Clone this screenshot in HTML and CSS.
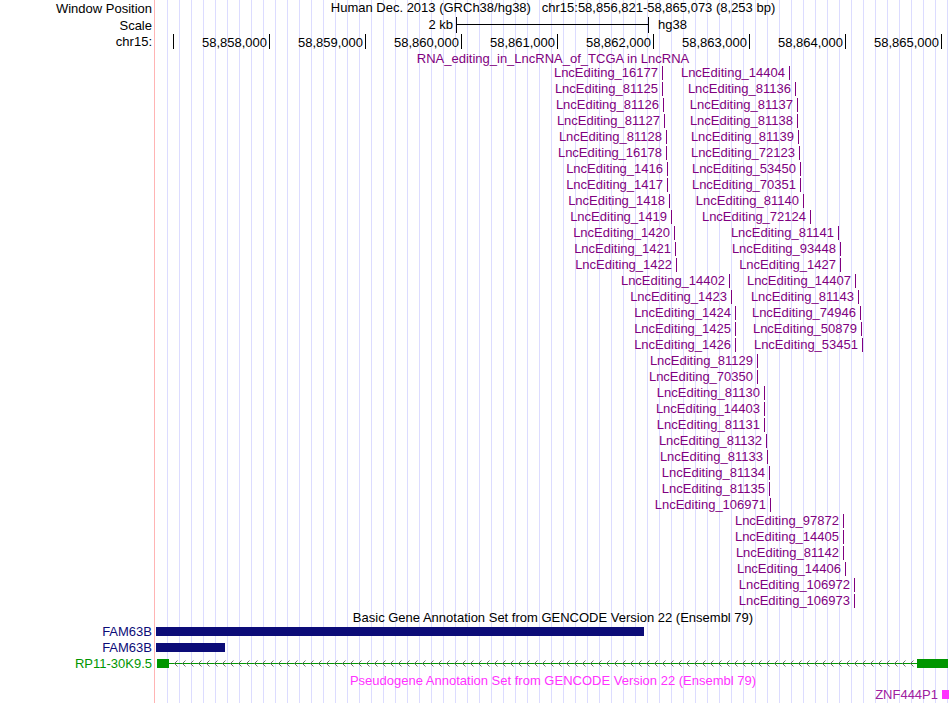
FILE: index.html
```html
<!DOCTYPE html>
<html lang="en">
<head>
<meta charset="utf-8">
<title>chr15:58,856,821-58,865,073</title>
<link rel="stylesheet" href="styles.css">
</head>
<body>
<main class="browser">
  <div class="labels">
    <div class="row ruler">Window Position</div>
    <div class="row ruler">Scale</div>
    <div class="row">chr15:</div>
    <div class="spacer"></div>
    <div class="row gene">FAM63B</div>
    <div class="row gene">FAM63B</div>
    <div class="row lnc">RP11-30K9.5</div>
    <div class="title"></div>
    <div class="row"></div>
  </div>
  <div class="tracks">
    <h1 class="row ruler position">Human Dec. 2013 (GRCh38/hg38)   chr15:58,856,821-58,865,073 (8,253 bp)</h1>
    <div class="row ruler">
      <span class="scale-size" style="--w:300">2 kb</span>
      <span class="scale-bar" style="--w:193"></span>
      <span class="assembly">hg38</span>
    </div>
    <div class="row bases">
      <span class="item" style="--w:18"></span>
      <span class="item" style="--w:96">58,858,000</span>
      <span class="item" style="--w:96">58,859,000</span>
      <span class="item" style="--w:96">58,860,000</span>
      <span class="item" style="--w:96">58,861,000</span>
      <span class="item" style="--w:96">58,862,000</span>
      <span class="item" style="--w:96">58,863,000</span>
      <span class="item" style="--w:96">58,864,000</span>
      <span class="item" style="--w:96">58,865,000</span>
    </div>
    <section class="editing">
      <h2 class="title">RNA_editing_in_LncRNA_of_TCGA in LncRNA</h2>
      <div class="row"><span class="item" style="--w:507">LncEditing_16177</span><span class="item" style="--w:127">LncEditing_14404</span></div>
      <div class="row"><span class="item" style="--w:507">LncEditing_81125</span><span class="item" style="--w:133">LncEditing_81136</span></div>
      <div class="row"><span class="item" style="--w:508">LncEditing_81126</span><span class="item" style="--w:134">LncEditing_81137</span></div>
      <div class="row"><span class="item" style="--w:509">LncEditing_81127</span><span class="item" style="--w:133">LncEditing_81138</span></div>
      <div class="row"><span class="item" style="--w:511">LncEditing_81128</span><span class="item" style="--w:132">LncEditing_81139</span></div>
      <div class="row"><span class="item" style="--w:511">LncEditing_16178</span><span class="item" style="--w:133">LncEditing_72123</span></div>
      <div class="row"><span class="item" style="--w:512">LncEditing_1416</span><span class="item" style="--w:133">LncEditing_53450</span></div>
      <div class="row"><span class="item" style="--w:512">LncEditing_1417</span><span class="item" style="--w:133">LncEditing_70351</span></div>
      <div class="row"><span class="item" style="--w:514">LncEditing_1418</span><span class="item" style="--w:134">LncEditing_81140</span></div>
      <div class="row"><span class="item" style="--w:516">LncEditing_1419</span><span class="item" style="--w:139">LncEditing_72124</span></div>
      <div class="row"><span class="item" style="--w:519">LncEditing_1420</span><span class="item" style="--w:164">LncEditing_81141</span></div>
      <div class="row"><span class="item" style="--w:520">LncEditing_1421</span><span class="item" style="--w:165">LncEditing_93448</span></div>
      <div class="row"><span class="item" style="--w:521">LncEditing_1422</span><span class="item" style="--w:164">LncEditing_1427</span></div>
      <div class="row"><span class="item" style="--w:574">LncEditing_14402</span><span class="item" style="--w:126">LncEditing_14407</span></div>
      <div class="row"><span class="item" style="--w:576">LncEditing_1423</span><span class="item" style="--w:127">LncEditing_81143</span></div>
      <div class="row"><span class="item" style="--w:580">LncEditing_1424</span><span class="item" style="--w:125">LncEditing_74946</span></div>
      <div class="row"><span class="item" style="--w:580">LncEditing_1425</span><span class="item" style="--w:126">LncEditing_50879</span></div>
      <div class="row"><span class="item" style="--w:580">LncEditing_1426</span><span class="item" style="--w:127">LncEditing_53451</span></div>
      <div class="row"><span class="item" style="--w:602">LncEditing_81129</span></div>
      <div class="row"><span class="item" style="--w:602">LncEditing_70350</span></div>
      <div class="row"><span class="item" style="--w:609">LncEditing_81130</span></div>
      <div class="row"><span class="item" style="--w:609">LncEditing_14403</span></div>
      <div class="row"><span class="item" style="--w:609">LncEditing_81131</span></div>
      <div class="row"><span class="item" style="--w:611">LncEditing_81132</span></div>
      <div class="row"><span class="item" style="--w:612">LncEditing_81133</span></div>
      <div class="row"><span class="item" style="--w:614">LncEditing_81134</span></div>
      <div class="row"><span class="item" style="--w:614">LncEditing_81135</span></div>
      <div class="row"><span class="item" style="--w:615">LncEditing_106971</span></div>
      <div class="row"><span class="item" style="--w:688">LncEditing_97872</span></div>
      <div class="row"><span class="item" style="--w:688">LncEditing_14405</span></div>
      <div class="row"><span class="item" style="--w:688">LncEditing_81142</span></div>
      <div class="row"><span class="item" style="--w:690">LncEditing_14406</span></div>
      <div class="row"><span class="item" style="--w:699">LncEditing_106972</span></div>
      <div class="row"><span class="item" style="--w:699">LncEditing_106973</span></div>
    </section>
    <section>
      <h2 class="title">Basic Gene Annotation Set from GENCODE Version 22 (Ensembl 79)</h2>
      <div class="row gene"><span class="exon" style="--w:488"></span></div>
      <div class="row gene"><span class="exon" style="--w:69"></span></div>
      <div class="row lnc">
        <span style="--w:1"></span>
        <span class="exon" style="--w:12"></span>
        <svg class="intron" style="--w:748" aria-hidden="true">
          <defs>
            <pattern id="minus-strand" x="5" width="8" height="9" patternUnits="userSpaceOnUse">
              <path d="M3.5 1.5 L0.5 4.5 L3.5 7.5" fill="none" stroke="#707070" stroke-width="1"/>
            </pattern>
          </defs>
          <rect y="4" width="100%" height="1" fill="#009600"/>
          <rect x="5" width="100%" height="9" fill="url(#minus-strand)"/>
        </svg>
        <span class="exon" style="--w:31"></span>
      </div>
    </section>
    <section class="pseudo">
      <h2 class="title">Pseudogene Annotation Set from GENCODE Version 22 (Ensembl 79)</h2>
      <div class="row"><span class="pseudo-name" style="--w:786">ZNF444P1</span><span class="exon" style="--w:7"></span></div>
    </section>
  </div>
</main>
</body>
</html>
```
FILE: styles.css
```css
* {
  box-sizing: border-box;
}

body {
  margin: 0;
  background: #fff;
  color: #000;
  font: 13px/16px "Liberation Sans", Arial, sans-serif;
}

.browser {
  display: flex;
}

.labels {
  display: flex;
  flex-direction: column;
  flex: 0 0 154px;
  padding-right: 2px;
  text-align: right;
}

.spacer {
  flex: 1;
}

/* Vertical guide lines every 12px, starting after the red window edge. */
.tracks {
  flex: 1;
  min-width: 0;
  padding-left: 1px;
  border-left: 1px solid #ffb4b4;
  background: linear-gradient(to left, #dcdcff 1px, transparent 1px) 0 0 / 12px 100% repeat-x content-box;
}

.row {
  display: flex;
  height: 16px;
}

.labels .row {
  justify-content: flex-end;
}

.row.ruler {
  height: 17px;
}

.labels .ruler {
  line-height: 18px;
}

/* --w is a length in units of 1/794 of the window. */
.row > * {
  flex: none;
  width: calc(var(--w) / 794 * 100%);
}

.position,
.title {
  margin: 0;
  font-size: 13px;
  font-weight: normal;
  text-align: center;
  white-space: pre;
}

.position {
  justify-content: center;
}

.title {
  height: 15px;
  line-height: 17px;
}

.item {
  height: 14px;
  margin-top: 1px;
  padding-right: 4px;
  border-right: 1px solid;
  line-height: 14px;
  text-align: right;
}

.bases .item {
  height: 15px;
  margin-top: 0;
  line-height: 17px;
  padding-right: 2px;
}

.scale-size {
  padding-right: 3px;
  text-align: right;
}

.scale-bar {
  height: 16px;
  border: solid #000;
  border-width: 0 1px;
  background: linear-gradient(#000, #000) 0 7px / 100% 1px no-repeat;
}

.row > .assembly {
  width: auto;
  margin-left: 9px;
}

.editing {
  color: #800080;
}

.gene {
  color: #0c0c78;
}

.lnc {
  color: #009600;
}

.exon {
  height: 9px;
  margin-top: 3px;
  background: currentColor;
}

.intron {
  height: 9px;
  margin-top: 3px;
}

.pseudo {
  color: #ff33ff;
}

.pseudo-name {
  padding-right: 4px;
  color: #a020a0;
  text-align: right;
}
```
